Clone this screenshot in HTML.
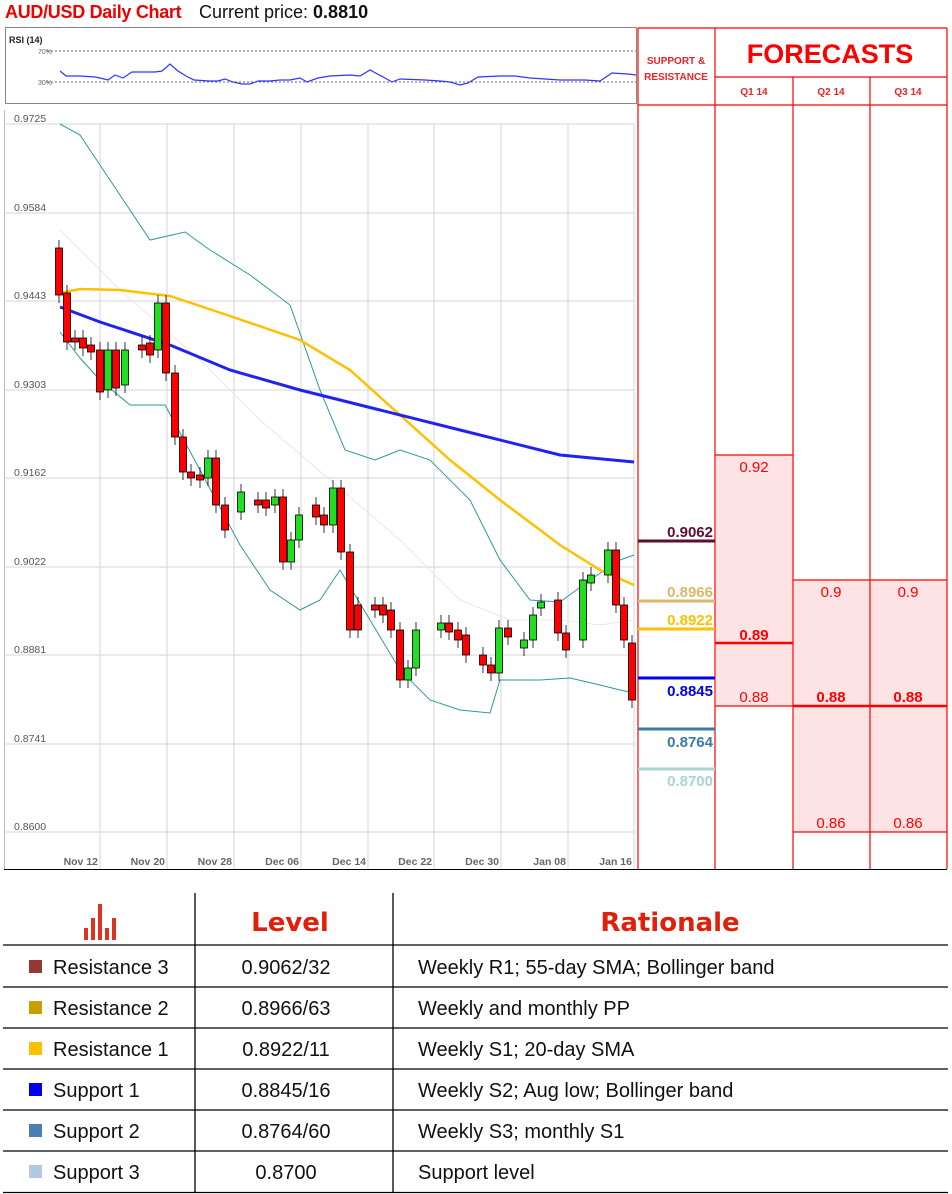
<!DOCTYPE html><html><head><meta charset="utf-8"><style>
body{margin:0;width:952px;height:1194px;background:#fff;position:relative;overflow:hidden;font-family:"Liberation Sans",sans-serif}
.a{position:absolute}
</style></head><body>
<div class="a" style="left:5px;top:2px;font-size:18px;color:#e00;font-weight:bold;letter-spacing:-0.3px">AUD/USD Daily Chart</div>
<div class="a" style="left:199px;top:2px;font-size:18px;color:#111">Current price: <b>0.8810</b></div>
<svg class="a" style="left:0;top:0" width="952" height="1194">
<rect x="5.5" y="27.5" width="631" height="76" fill="#fff" stroke="#888"/>
<text x="9" y="43" font-size="9" font-weight="bold" fill="#222">RSI (14)</text>
<text x="38" y="54" font-size="7" fill="#666">70%</text><text x="38" y="85" font-size="7" fill="#666">30%</text>
<line x1="47" y1="51" x2="636" y2="51" stroke="#666" stroke-dasharray="2,2"/>
<line x1="47" y1="82" x2="636" y2="82" stroke="#666" stroke-dasharray="2,2"/>
<polyline fill="none" stroke="#33f" stroke-width="1.2" points="60,71 66,76 80,76 95,77 100,78 108,80 115,75 123,78 132,72 155,72 162,71 170,64 178,71 186,76 194,80 210,81 218,81 225,79 233,82 242,84 250,84 258,81 270,81 280,80 290,80 300,78 307,82 318,78 330,76 350,75 360,76 370,70 385,78 392,82 400,79 425,80 440,81 450,82 460,85 468,83 478,77 500,76 515,76 530,78 545,79 560,80 570,80 585,80 600,81 612,73 628,74 636,75"/>
<line x1="4.5" y1="110" x2="4.5" y2="869" stroke="#bbb"/>
<g stroke="#d4d4d4">
<line x1="100" y1="124" x2="100" y2="869"/><line x1="167" y1="124" x2="167" y2="869"/><line x1="234" y1="124" x2="234" y2="869"/><line x1="301" y1="124" x2="301" y2="869"/><line x1="368" y1="124" x2="368" y2="869"/><line x1="434" y1="124" x2="434" y2="869"/><line x1="501" y1="124" x2="501" y2="869"/><line x1="568" y1="124" x2="568" y2="869"/><line x1="634" y1="124" x2="634" y2="869"/>
<line x1="4" y1="124" x2="634" y2="124"/><line x1="4" y1="213" x2="634" y2="213"/><line x1="4" y1="301" x2="634" y2="301"/><line x1="4" y1="390" x2="634" y2="390"/><line x1="4" y1="478" x2="634" y2="478"/><line x1="4" y1="567" x2="634" y2="567"/><line x1="4" y1="655" x2="634" y2="655"/><line x1="4" y1="744" x2="634" y2="744"/><line x1="4" y1="832" x2="634" y2="832"/>
</g>
<line x1="4" y1="869.5" x2="638" y2="869.5" stroke="#000"/>
<g font-size="10.5" fill="#555">
<text x="14" y="122">0.9725</text><text x="14" y="211">0.9584</text><text x="14" y="299">0.9443</text><text x="14" y="388">0.9303</text><text x="14" y="476">0.9162</text><text x="14" y="565">0.9022</text><text x="14" y="653">0.8881</text><text x="14" y="742">0.8741</text><text x="14" y="830">0.8600</text>
</g>
<g font-size="10.5" font-weight="bold" fill="#666" text-anchor="end">
<text x="98" y="865">Nov 12</text><text x="165" y="865">Nov 20</text><text x="232" y="865">Nov 28</text><text x="299" y="865">Dec 06</text><text x="366" y="865">Dec 14</text><text x="432" y="865">Dec 22</text><text x="499" y="865">Dec 30</text><text x="566" y="865">Jan 08</text><text x="632" y="865">Jan 16</text>
</g>
<polyline fill="none" stroke="#2a9a9a" stroke-width="1" points="60,124 80,135 110,180 150,240 185,232 210,250 250,275 290,305 320,390 345,450 375,460 400,450 430,460 470,500 500,560 530,600 560,602 590,580 620,560 634,555"/>
<polyline fill="none" stroke="#2a9a9a" stroke-width="1" points="60,332 80,358 100,380 130,405 165,405 200,470 240,545 270,590 300,610 320,600 340,570 370,620 400,670 430,700 460,710 490,713 500,680 540,680 570,678 600,685 620,690 634,693"/>
<polyline fill="none" stroke="#e8e8e8" stroke-width="1" points="60,230 120,290 200,360 260,420 330,480 400,540 460,600 510,620 560,620 600,625 634,620"/>
<polyline fill="none" stroke="#ffc000" stroke-width="2.5" points="60,293 80,289 120,290 170,296 230,316 300,340 350,370 400,415 450,460 500,500 560,545 600,570 634,585"/>
<polyline fill="none" stroke="#2222ee" stroke-width="3" points="60,307 100,322 170,345 230,370 300,390 380,410 460,430 560,455 634,462"/>
<g stroke="#000" stroke-width="0.8" id="c"></g>
<rect x="716" y="455" width="77" height="251" fill="#fde3e3"/>
<rect x="794" y="580" width="153" height="252" fill="#fde3e3"/>
<g stroke="#f00" stroke-width="1.2" fill="none">
<line x1="638" y1="28" x2="638" y2="869"/><line x1="715" y1="28" x2="715" y2="869"/><line x1="793" y1="77" x2="793" y2="869"/><line x1="870" y1="77" x2="870" y2="869"/><line x1="947" y1="28" x2="947" y2="869"/>
<line x1="638" y1="28" x2="947" y2="28"/><line x1="715" y1="77" x2="947" y2="77"/><line x1="638" y1="105" x2="947" y2="105"/>
<line x1="715" y1="455" x2="793" y2="455"/><line x1="715" y1="706" x2="793" y2="706"/>
<line x1="793" y1="580" x2="947" y2="580"/><line x1="793" y1="832" x2="947" y2="832"/>
</g>
<line x1="715" y1="643" x2="793" y2="643" stroke="#f00" stroke-width="2.5"/>
<line x1="793" y1="706" x2="947" y2="706" stroke="#f00" stroke-width="2.5"/>
<line x1="638" y1="869.5" x2="947" y2="869.5" stroke="#000"/>
<text x="676" y="64" font-size="10" font-weight="bold" fill="#e22" text-anchor="middle">SUPPORT &amp;</text>
<text x="676" y="80" font-size="10" font-weight="bold" fill="#e22" text-anchor="middle">RESISTANCE</text>
<text x="830" y="63" font-size="27" font-weight="bold" fill="#f00" text-anchor="middle">FORECASTS</text>
<g font-size="10" font-weight="bold" fill="#e22" text-anchor="middle"><text x="754" y="95">Q1 14</text><text x="831" y="95">Q2 14</text><text x="908" y="95">Q3 14</text></g>
<g font-size="15" fill="#f00" text-anchor="middle">
<text x="754" y="472">0.92</text><text x="754" y="702">0.88</text><text x="831" y="597">0.9</text><text x="908" y="597">0.9</text><text x="831" y="828">0.86</text><text x="908" y="828">0.86</text>
<text x="754" y="640" font-weight="bold">0.89</text><text x="831" y="702" font-weight="bold">0.88</text><text x="908" y="702" font-weight="bold">0.88</text>
</g>
<g stroke-width="3"><line x1="638" y1="541" x2="715" y2="541" stroke="#5a0f2e"/><line x1="638" y1="601" x2="715" y2="601" stroke="#d9b86a"/><line x1="638" y1="629" x2="715" y2="629" stroke="#ffc000"/><line x1="638" y1="678" x2="715" y2="678" stroke="#0000ee"/><line x1="638" y1="729" x2="715" y2="729" stroke="#3a7ca5"/><line x1="638" y1="769" x2="715" y2="769" stroke="#a8d4d4"/></g>
<g font-size="15" font-weight="bold" text-anchor="end">
<text x="713" y="537" fill="#5a0f2e">0.9062</text><text x="713" y="597" fill="#d9b86a">0.8966</text><text x="713" y="625" fill="#ffc000">0.8922</text><text x="713" y="696" fill="#0000ee">0.8845</text><text x="713" y="747" fill="#3a7ca5">0.8764</text><text x="713" y="786" fill="#a8d4d4">0.8700</text>
</g>
<g stroke="#000" stroke-width="1.3">
<line x1="195" y1="893" x2="195" y2="1193"/><line x1="393" y1="893" x2="393" y2="1193"/>
<line x1="3" y1="945" x2="948" y2="945"/><line x1="3" y1="987" x2="948" y2="987"/><line x1="3" y1="1028" x2="948" y2="1028"/><line x1="3" y1="1069" x2="948" y2="1069"/><line x1="3" y1="1110" x2="948" y2="1110"/><line x1="3" y1="1151" x2="948" y2="1151"/><line x1="3" y1="1192.5" x2="948" y2="1192.5"/>
</g>
<g fill="#d32"><rect x="84" y="928" width="4" height="12"/><rect x="91" y="918" width="4" height="22"/><rect x="98" y="904" width="4" height="36"/><rect x="105" y="928" width="4" height="12"/><rect x="112" y="918" width="4" height="22"/></g>
<text x="290" y="931" font-size="26" font-weight="bold" fill="#e0200a" text-anchor="middle" font-family="DejaVu Sans">Level</text>
<text x="670" y="931" font-size="26" font-weight="bold" fill="#e0200a" text-anchor="middle" font-family="DejaVu Sans">Rationale</text>
<g font-size="20" fill="#111">
<rect x="29" y="960" width="13" height="13" fill="#953735"/><text x="53" y="974">Resistance 3</text><text x="286" y="974" text-anchor="middle">0.9062/32</text><text x="418" y="974">Weekly R1; 55-day SMA; Bollinger band</text>
<rect x="29" y="1001" width="13" height="13" fill="#c9a000"/><text x="53" y="1015">Resistance 2</text><text x="286" y="1015" text-anchor="middle">0.8966/63</text><text x="418" y="1015">Weekly and monthly PP</text>
<rect x="29" y="1042" width="13" height="13" fill="#ffc000"/><text x="53" y="1056">Resistance 1</text><text x="286" y="1056" text-anchor="middle">0.8922/11</text><text x="418" y="1056">Weekly S1; 20-day SMA</text>
<rect x="29" y="1083" width="13" height="13" fill="#0000ee"/><text x="53" y="1097">Support 1</text><text x="286" y="1097" text-anchor="middle">0.8845/16</text><text x="418" y="1097">Weekly S2; Aug low; Bollinger band</text>
<rect x="29" y="1124" width="13" height="13" fill="#4a7fb5"/><text x="53" y="1138">Support 2</text><text x="286" y="1138" text-anchor="middle">0.8764/60</text><text x="418" y="1138">Weekly S3; monthly S1</text>
<rect x="29" y="1165" width="13" height="13" fill="#b4c8e4"/><text x="53" y="1179">Support 3</text><text x="286" y="1179" text-anchor="middle">0.8700</text><text x="418" y="1179">Support level</text>
</g>
</svg>
<script>
var d=[[59,'r',248,295],[67,'r',293,342],[75,'r',338,342],[83,'r',338,348],[91,'r',345,352],[100,'r',350,392],[108,'g',350,390],[116,'r',350,388],[125,'g',350,385],[142,'r',345,350],[150,'r',343,355],[158,'g',303,350],[166,'r',303,373],[175,'r',373,437],[183,'r',437,472],[191,'r',472,478],[200,'r',475,480],[208,'g',458,478],[216,'r',458,505],[225,'r',505,530],[241,'g',492,512],[258,'r',500,505],[266,'r',500,508],[275,'g',497,505],[283,'r',497,562],[291,'g',540,562],[299,'g',515,540],[316,'r',505,517],[324,'r',515,525],[333,'g',488,525],[341,'r',488,552],[350,'r',552,630],[358,'r',605,630],[375,'r',605,610],[383,'r',605,615],[391,'r',610,630],[400,'r',630,680],[408,'g',668,680],[416,'g',630,668],[441,'g',623,630],[449,'r',623,632],[458,'r',630,640],[466,'r',635,655],[483,'r',655,665],[491,'r',665,673],[499,'g',628,673],[508,'r',628,637],[524,'g',640,648],[533,'g',615,640],[541,'g',602,608],[558,'r',600,633],[566,'r',633,650],[583,'g',580,640],[591,'g',575,583],[608,'g',550,575],[616,'r',550,605],[624,'r',605,640],[632,'r',643,700]];
var g=document.getElementById('c'),s='';
d.forEach(function(c){s+='<line x1="'+c[0]+'" x2="'+c[0]+'" y1="'+(c[2]-8)+'" y2="'+(c[3]+8)+'"/><rect x="'+(c[0]-3.5)+'" y="'+c[2]+'" width="7" height="'+Math.max(2,c[3]-c[2])+'" fill="'+(c[1]=='r'?'#f00':'#2d2')+'"/>';});
g.innerHTML=s;
</script>
</body></html>
